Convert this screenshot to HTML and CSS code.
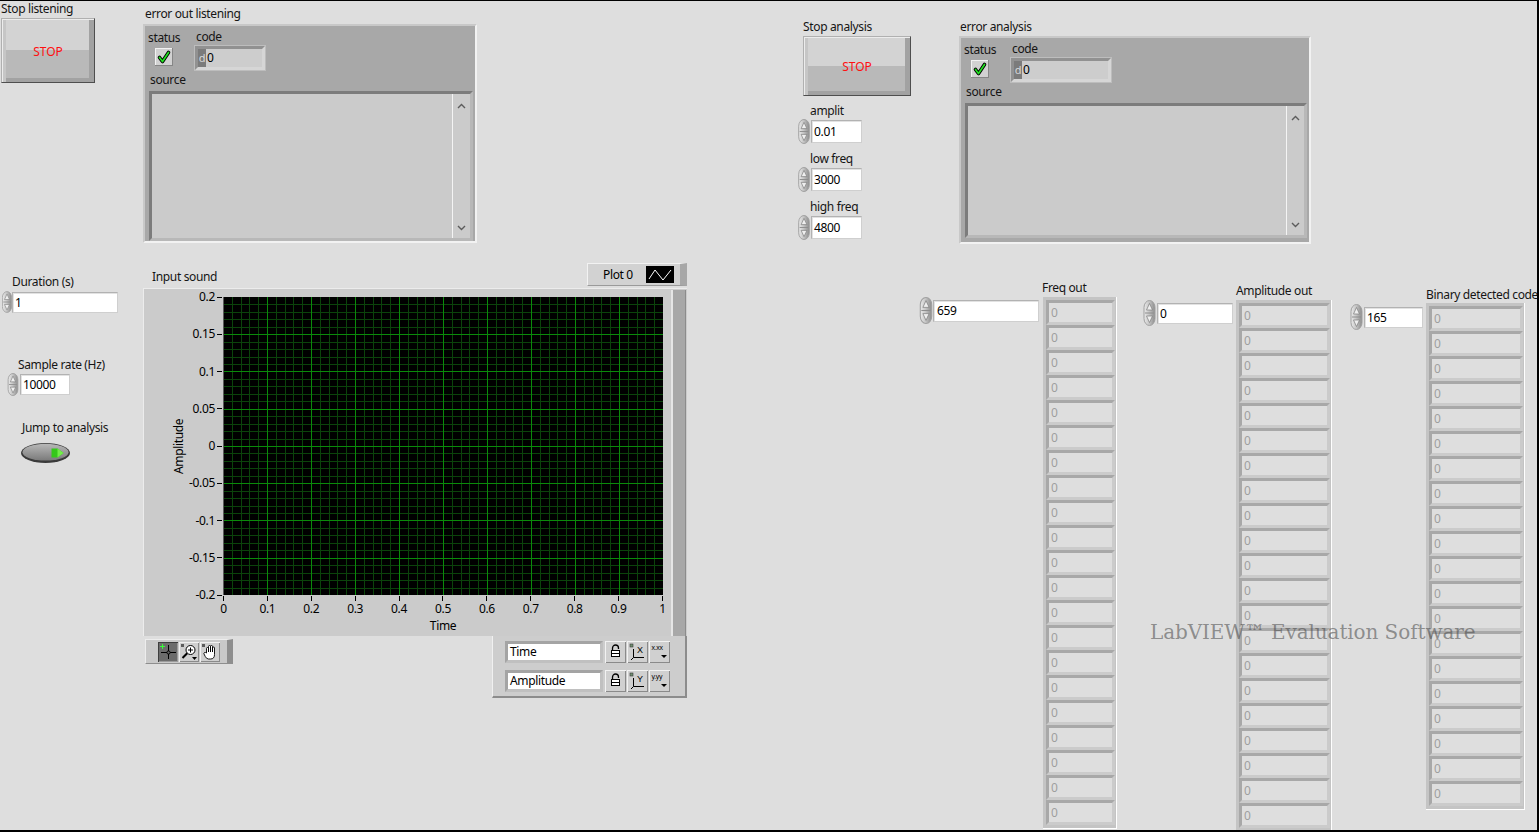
FILE: index.html
```html
<!DOCTYPE html>
<html>
<head>
<meta charset="utf-8">
<title>Front Panel</title>
<link rel="stylesheet" href="styles.css">
</head>
<body>
<svg class="defs" width="0" height="0" aria-hidden="true">
  <defs>
    <linearGradient id="gSpin" x1="0" y1="0" x2="1" y2="0">
      <stop offset="0" stop-color="#ebebeb"/>
      <stop offset="0.45" stop-color="#c6c6c6"/>
      <stop offset="1" stop-color="#8c8c8c"/>
    </linearGradient>
    <linearGradient id="gJump" x1="0" y1="0" x2="0" y2="1">
      <stop offset="0" stop-color="#b8b8b8"/>
      <stop offset="1" stop-color="#7a7a7a"/>
    </linearGradient>
    <symbol id="spin" viewBox="0 0 12 26">
      <rect x="0.5" y="0.5" width="11" height="25" rx="5.5" ry="7" fill="url(#gSpin)" stroke="#a0a0a0"/>
      <line x1="1.5" y1="13" x2="10.5" y2="13" stroke="#8e8e8e"/>
      <path d="M6 3.5 L9 10 L3 10 Z" fill="#efefef" stroke="#7c7c7c" stroke-width="0.7"/>
      <path d="M6 22.5 L9 16 L3 16 Z" fill="#efefef" stroke="#7c7c7c" stroke-width="0.7"/>
    </symbol>
    <symbol id="chk" viewBox="0 0 18 18">
      <rect x="0" y="0" width="18" height="18" fill="#868686"/>
      <rect x="0" y="0" width="17" height="17" fill="#f2f2f2"/>
      <rect x="1" y="1" width="16" height="16" fill="#d2d2d2"/>
      <path d="M4.5 9.5 L7.5 13.5 L13.5 4.5" fill="none" stroke="#000" stroke-width="3.6" stroke-linecap="round" stroke-linejoin="round"/>
      <path d="M4.5 9.5 L7.5 13.5 L13.5 4.5" fill="none" stroke="#22e022" stroke-width="1.7" stroke-linecap="round" stroke-linejoin="round"/>
    </symbol>
    <symbol id="up" viewBox="0 0 9 6">
      <path d="M1 5 L4.5 1.5 L8 5" fill="none" stroke="#5c5c5c" stroke-width="1.4"/>
    </symbol>
    <symbol id="down" viewBox="0 0 9 6">
      <path d="M1 1 L4.5 4.5 L8 1" fill="none" stroke="#5c5c5c" stroke-width="1.4"/>
    </symbol>
    <symbol id="lock" viewBox="0 0 21 21">
      <path d="M7.5 9.5V7a3 3 0 0 1 6 0v1" fill="none" stroke="#000" stroke-width="1.3"/>
      <rect x="6.5" y="9.5" width="8" height="6" fill="#fff" stroke="#000"/>
      <path d="M7 12.5h7" stroke="#000"/>
    </symbol>
  </defs>
</svg>

<div class="fp">

  <!-- Stop listening -->
  <div class="ctl p-stopL">
    <div class="lbl">Stop listening</div>
    <div class="stop stop-l"><span>STOP</span></div>
  </div>

  <!-- error out listening -->
  <div class="ctl p-errL">
    <div class="lbl lbl-in">error out listening</div>
    <div class="cluster cl-l">
      <div class="cl-row">
        <div class="cl-status">
          <div class="lbl">status</div>
          <svg class="chk" width="18" height="18"><use href="#chk"/></svg>
        </div>
        <div class="cl-code">
          <div class="lbl lbl-code">code</div>
          <div class="code code-l"><span class="radix">d</span><span class="cval">0</span></div>
        </div>
      </div>
      <div class="lbl lbl-src">source</div>
      <div class="src src-l">
        <div class="src-text"></div>
        <div class="src-bar">
          <svg width="9" height="6"><use href="#up"/></svg>
          <svg width="9" height="6"><use href="#down"/></svg>
        </div>
      </div>
    </div>
  </div>

  <!-- Stop analysis -->
  <div class="ctl p-stopA">
    <div class="lbl">Stop analysis</div>
    <div class="stop stop-a"><span>STOP</span></div>
  </div>

  <!-- amplit / low freq / high freq -->
  <div class="ctl p-amp">
    <div class="lbl lbl-num">amplit</div>
    <div class="numrow">
      <svg class="spin" width="12" height="25"><use href="#spin"/></svg>
      <div class="num num-af">0.01</div>
    </div>
  </div>
  <div class="ctl p-low">
    <div class="lbl lbl-num">low freq</div>
    <div class="numrow">
      <svg class="spin" width="12" height="25"><use href="#spin"/></svg>
      <div class="num num-af">3000</div>
    </div>
  </div>
  <div class="ctl p-high">
    <div class="lbl lbl-num">high freq</div>
    <div class="numrow">
      <svg class="spin" width="12" height="25"><use href="#spin"/></svg>
      <div class="num num-af">4800</div>
    </div>
  </div>

  <!-- error analysis -->
  <div class="ctl p-errA">
    <div class="lbl lbl-in1">error analysis</div>
    <div class="cluster cl-a">
      <div class="cl-row">
        <div class="cl-status">
          <div class="lbl">status</div>
          <svg class="chk" width="18" height="18"><use href="#chk"/></svg>
        </div>
        <div class="cl-code">
          <div class="lbl lbl-code">code</div>
          <div class="code code-a"><span class="radix">d</span><span class="cval">0</span></div>
        </div>
      </div>
      <div class="lbl lbl-src">source</div>
      <div class="src src-a">
        <div class="src-text"></div>
        <div class="src-bar">
          <svg width="9" height="6"><use href="#up"/></svg>
          <svg width="9" height="6"><use href="#down"/></svg>
        </div>
      </div>
    </div>
  </div>

  <!-- Duration -->
  <div class="ctl p-dur">
    <div class="lbl lbl-dur">Duration (s)</div>
    <div class="numrow">
      <svg class="spin" width="10" height="24"><use href="#spin"/></svg>
      <div class="num num-dur">1</div>
    </div>
  </div>

  <!-- Sample rate -->
  <div class="ctl p-sr">
    <div class="lbl lbl-sr">Sample rate (Hz)</div>
    <div class="numrow">
      <svg class="spin" width="12" height="23"><use href="#spin"/></svg>
      <div class="num num-sr">10000</div>
    </div>
  </div>

  <!-- Jump to analysis -->
  <div class="ctl p-jump">
    <div class="lbl lbl-jump">Jump to analysis</div>
    <svg class="jbtn" width="52" height="22" viewBox="0 0 52 22">
      <ellipse cx="25.5" cy="11" rx="24.5" ry="10" fill="#3a3a3a"/>
      <ellipse cx="25.5" cy="10.2" rx="23" ry="8.4" fill="url(#gJump)"/>
      <path d="M31.5 6.5h6l6 4.5l-6 4.5h-6z" fill="#35c81a"/>
      <path d="M37.5 6.5l6 4.5l-6 4.5z" fill="#72ee48"/>
    </svg>
  </div>

  <!-- Waveform graph -->
  <div class="ctl p-graph">
    <div class="g-head">
      <div class="lbl g-name">Input sound</div>
      <div class="plegend">
        <span class="pname">Plot 0</span>
        <svg class="swatch" width="28" height="17" viewBox="0 0 28 17">
          <rect width="28" height="17" fill="#000"/>
          <polyline points="3,13 9,4 17,14 25,4" fill="none" stroke="#fff" stroke-width="1"/>
        </svg>
      </div>
    </div>
    <div class="g-frame">
      <div class="g-yaxis">
        <div class="g-yname">Amplitude</div>
        <div class="g-yticks">
          <div class="yt"><span>0.2</span></div>
          <div class="yt"><span>0.15</span></div>
          <div class="yt"><span>0.1</span></div>
          <div class="yt"><span>0.05</span></div>
          <div class="yt"><span>0</span></div>
          <div class="yt"><span>-0.05</span></div>
          <div class="yt"><span>-0.1</span></div>
          <div class="yt"><span>-0.15</span></div>
          <div class="yt"><span>-0.2</span></div>
        </div>
      </div>
      <div class="g-plotcol">
        <svg class="plot" width="440" height="298" viewBox="0 0 440 298" shape-rendering="crispEdges">
          <rect width="440" height="298" fill="#000"/>
          <path stroke="#0b430b" stroke-width="1" d="M9.5 0v298M18.5 0v298M26.5 0v298M35.5 0v298M53.5 0v298M62.5 0v298M70.5 0v298M79.5 0v298M97.5 0v298M106.5 0v298M114.5 0v298M123.5 0v298M141.5 0v298M150.5 0v298M158.5 0v298M167.5 0v298M185.5 0v298M194.5 0v298M202.5 0v298M211.5 0v298M229.5 0v298M238.5 0v298M246.5 0v298M255.5 0v298M273.5 0v298M282.5 0v298M290.5 0v298M299.5 0v298M317.5 0v298M326.5 0v298M334.5 0v298M343.5 0v298M361.5 0v298M370.5 0v298M378.5 0v298M387.5 0v298M405.5 0v298M414.5 0v298M422.5 0v298M431.5 0v298M0 7.5h440M0 15.5h440M0 22.5h440M0 30.5h440M0 45.5h440M0 52.5h440M0 60.5h440M0 67.5h440M0 82.5h440M0 89.5h440M0 97.5h440M0 104.5h440M0 119.5h440M0 127.5h440M0 134.5h440M0 142.5h440M0 156.5h440M0 164.5h440M0 171.5h440M0 179.5h440M0 194.5h440M0 201.5h440M0 209.5h440M0 216.5h440M0 231.5h440M0 238.5h440M0 246.5h440M0 253.5h440M0 268.5h440M0 276.5h440M0 283.5h440M0 291.5h440"/>
          <path stroke="#0a8a0a" stroke-width="1" d="M44.5 0v298M88.5 0v298M132.5 0v298M176.5 0v298M220.5 0v298M264.5 0v298M308.5 0v298M352.5 0v298M396.5 0v298M0 37.5h440M0 74.5h440M0 112.5h440M0 149.5h440M0 186.5h440M0 223.5h440M0 261.5h440"/>
          <path stroke="#5a5a5a" stroke-width="1" d="M0.5 0v298"/>
        </svg>
        <div class="g-xticks">
          <div class="xt"><span>0</span></div>
          <div class="xt"><span>0.1</span></div>
          <div class="xt"><span>0.2</span></div>
          <div class="xt"><span>0.3</span></div>
          <div class="xt"><span>0.4</span></div>
          <div class="xt"><span>0.5</span></div>
          <div class="xt"><span>0.6</span></div>
          <div class="xt"><span>0.7</span></div>
          <div class="xt"><span>0.8</span></div>
          <div class="xt"><span>0.9</span></div>
          <div class="xt"><span>1</span></div>
        </div>
        <div class="g-xname">Time</div>
      </div>
      <div class="g-strip"></div>
    </div>
    <div class="g-foot">
      <div class="palette">
        <div class="pbtn pbtn-on">
          <svg width="20" height="20" viewBox="0 0 20 20">
            <path d="M10.5 3v14M3 10.5h15" stroke="#000" stroke-width="1"/>
            <circle cx="10.5" cy="10.5" r="1.6" fill="#6a6a6a" stroke="#000"/>
            <path d="M4.5 2v5M2 4.5h5" stroke="#39ff39" stroke-width="1"/>
          </svg>
        </div>
        <div class="pbtn">
          <svg width="20" height="20" viewBox="0 0 20 20">
            <rect x="2" y="2" width="3" height="3" fill="#5c5c5c"/>
            <circle cx="11.5" cy="8" r="4.5" fill="#fff" stroke="#000"/>
            <path d="M11.5 5.5v5M9 8h5" stroke="#000"/>
            <path d="M8.2 11.3L3.5 16" stroke="#000" stroke-width="2"/>
            <path d="M13 15h5l-2.5 3z" fill="#000"/>
          </svg>
        </div>
        <div class="pbtn">
          <svg width="20" height="20" viewBox="0 0 20 20">
            <rect x="2" y="2" width="3" height="3" fill="#5c5c5c"/>
            <path d="M6.5 11V6.5a1 1 0 0 1 2 0V10V4.5a1 1 0 0 1 2 0V10V4.5a1 1 0 0 1 2 0V10V6a1 1 0 0 1 2 0V12.5q0 4.5-4 4.5h-2q-2 0-3.3-2.6L4 12a1 1 0 0 1 2-1z" fill="#fff" stroke="#000" stroke-width="0.9"/>
          </svg>
        </div>
      </div>
      <div class="axleg">
        <div class="axrow">
          <div class="axfield">Time</div>
          <div class="axbtn"><svg width="21" height="21"><use href="#lock"/></svg></div>
          <div class="axbtn">
            <svg width="21" height="21" viewBox="0 0 21 21">
              <rect x="3" y="3" width="3" height="3" fill="#6f8f6f" stroke="#3a3a3a" stroke-width="0.6"/>
              <path d="M6.5 8v8.5H17M6.5 16.5L4 19" fill="none" stroke="#000" stroke-width="1"/>
              <text x="10" y="12" font-size="9" font-family="Liberation Sans, sans-serif" fill="#000">X</text>
            </svg>
          </div>
          <div class="axbtn">
            <svg width="21" height="21" viewBox="0 0 21 21">
              <text x="2.5" y="9" font-size="7" font-family="Liberation Sans, sans-serif" fill="#000">x.xx</text>
              <path d="M12 14h6l-3 3z" fill="#000"/>
            </svg>
          </div>
        </div>
        <div class="axrow">
          <div class="axfield">Amplitude</div>
          <div class="axbtn"><svg width="21" height="21"><use href="#lock"/></svg></div>
          <div class="axbtn">
            <svg width="21" height="21" viewBox="0 0 21 21">
              <rect x="3" y="3" width="3" height="3" fill="#6f8f6f" stroke="#3a3a3a" stroke-width="0.6"/>
              <path d="M6.5 8v8.5H17M6.5 16.5L4 19" fill="none" stroke="#000" stroke-width="1"/>
              <text x="10" y="12" font-size="9" font-family="Liberation Sans, sans-serif" fill="#000">Y</text>
            </svg>
          </div>
          <div class="axbtn">
            <svg width="21" height="21" viewBox="0 0 21 21">
              <text x="2.5" y="9" font-size="7" font-family="Liberation Sans, sans-serif" fill="#000">y.yy</text>
              <path d="M12 14h6l-3 3z" fill="#000"/>
            </svg>
          </div>
        </div>
      </div>
    </div>
  </div>

  <!-- Freq out -->
  <div class="ctl p-fidx">
    <div class="numrow">
      <svg class="spin" width="14" height="27"><use href="#spin"/></svg>
      <div class="num num-fidx">659</div>
    </div>
  </div>
  <div class="ctl p-freq">
    <div class="lbl">Freq out</div>
    <div class="aframe af-freq">
      <div class="el">0</div><div class="el">0</div><div class="el">0</div><div class="el">0</div><div class="el">0</div><div class="el">0</div><div class="el">0</div>
      <div class="el">0</div><div class="el">0</div><div class="el">0</div><div class="el">0</div><div class="el">0</div><div class="el">0</div><div class="el">0</div>
      <div class="el">0</div><div class="el">0</div><div class="el">0</div><div class="el">0</div><div class="el">0</div><div class="el">0</div><div class="el">0</div>
    </div>
  </div>

  <!-- Amplitude out -->
  <div class="ctl p-aidx">
    <div class="numrow">
      <svg class="spin" width="13" height="26"><use href="#spin"/></svg>
      <div class="num num-aidx">0</div>
    </div>
  </div>
  <div class="ctl p-aout">
    <div class="lbl">Amplitude out</div>
    <div class="aframe af-amp">
      <div class="el">0</div><div class="el">0</div><div class="el">0</div><div class="el">0</div><div class="el">0</div><div class="el">0</div><div class="el">0</div>
      <div class="el">0</div><div class="el">0</div><div class="el">0</div><div class="el">0</div><div class="el">0</div><div class="el">0</div><div class="el">0</div>
      <div class="el">0</div><div class="el">0</div><div class="el">0</div><div class="el">0</div><div class="el">0</div><div class="el">0</div><div class="el">0</div>
    </div>
  </div>

  <!-- Binary detected code -->
  <div class="ctl p-bidx">
    <div class="numrow">
      <svg class="spin" width="13" height="26"><use href="#spin"/></svg>
      <div class="num num-bidx">165</div>
    </div>
  </div>
  <div class="ctl p-bin">
    <div class="lbl">Binary detected code</div>
    <div class="aframe af-bin">
      <div class="el">0</div><div class="el">0</div><div class="el">0</div><div class="el">0</div><div class="el">0</div>
      <div class="el">0</div><div class="el">0</div><div class="el">0</div><div class="el">0</div><div class="el">0</div>
      <div class="el">0</div><div class="el">0</div><div class="el">0</div><div class="el">0</div><div class="el">0</div>
      <div class="el">0</div><div class="el">0</div><div class="el">0</div><div class="el">0</div><div class="el">0</div>
    </div>
  </div>

  <div class="watermark">LabVIEW™ Evaluation Software</div>
</div>
</body>
</html>
```

FILE: styles.css
```css
* { box-sizing: border-box; }

html, body {
  margin: 0;
  padding: 0;
  background: #dedede;
}

.defs {
  position: absolute;
  width: 0;
  height: 0;
  overflow: hidden;
}

.fp {
  position: relative;
  width: 1539px;
  height: 832px;
  border-top: 1px solid #000;
  border-right: 2px solid #000;
  border-bottom: 2px solid #000;
  background: #dedede;
  overflow: hidden;
  font-family: "Noto Sans", "Open Sans", sans-serif;
  font-size: 12px;
  letter-spacing: -0.35px;
  line-height: 15px;
  color: #151515;
}

/* free-canvas controls of the front panel */
.ctl {
  position: absolute;
  display: flex;
  flex-direction: column;
  align-items: flex-start;
}

.lbl {
  white-space: nowrap;
  line-height: 15px;
}

.p-stopL { left: 1px; top: 0; }
.p-errL  { left: 143px; top: 5px; }
.p-stopA { left: 803px; top: 18px; }
.p-amp   { left: 798px; top: 102px; }
.p-low   { left: 798px; top: 150px; }
.p-high  { left: 798px; top: 198px; }
.p-errA  { left: 959px; top: 18px; }
.p-dur   { left: 2px; top: 273px; }
.p-sr    { left: 7px; top: 356px; }
.p-jump  { left: 20px; top: 419px; }
.p-graph { left: 143px; top: 262px; width: 544px; }
.p-fidx  { left: 919px; top: 295px; }
.p-freq  { left: 1042px; top: 279px; }
.p-aidx  { left: 1143px; top: 298px; }
.p-aout  { left: 1236px; top: 282px; }
.p-bidx  { left: 1350px; top: 302px; }
.p-bin   { left: 1426px; top: 286px; }

/* STOP buttons */
.stop {
  display: flex;
  align-items: center;
  justify-content: center;
  color: #ff1010;
  letter-spacing: 0;
  border: 1px solid;
  border-color: #b0b0b0 #4e4e4e #4e4e4e #b0b0b0;
  background: linear-gradient(#d3d3d3 0, #d3d3d3 50%, #b9b9b9 50%, #b9b9b9 100%);
  box-shadow: inset 1px 1px 0 #ececec, inset 4px 0 0 #c6c6c6, inset -5px -4px 0 #a2a2a2;
}
.stop span { margin-top: 1px; }
.stop-l { width: 94px; height: 65px; margin-top: 2px; }
.stop-a { width: 108px; height: 60px; margin-top: 2px; }

/* error clusters */
.lbl-in  { margin-left: 2px; }
.lbl-in1 { margin-left: 1px; }

.cluster {
  margin-top: 3px;
  display: flex;
  flex-direction: column;
  align-items: flex-start;
  background: #a8a8a8;
  border: 2px solid;
  border-color: #c8c8c8 #f2f2f2 #f2f2f2 #c8c8c8;
  padding: 4px 3px 0 3px;
}
.cl-l { width: 334px; height: 219px; }
.cl-a { width: 352px; height: 208px; margin-top: 2px; }

.cl-row {
  display: flex;
  align-items: flex-start;
}
.cl-status {
  display: flex;
  flex-direction: column;
  align-items: flex-start;
  width: 47px;
}
.cl-status .chk { margin-top: 3px; margin-left: 7px; }
.cl-code {
  display: flex;
  flex-direction: column;
  align-items: flex-start;
}
.lbl-code { margin-left: 1px; margin-top: -1px; }

.code {
  margin-top: 2px;
  height: 24px;
  display: flex;
  align-items: stretch;
  border: 3px solid;
  border-color: #919191 #d6d6d6 #d6d6d6 #919191;
  box-shadow: 0 0 0 1px #bdbdbd;
  background: #cdcdcd;
  line-height: 18px;
}
.code-l { width: 70px; }
.code-a { width: 100px; }
.radix {
  width: 8px;
  background: #7b7b7b;
  color: #d8d8d8;
  text-align: center;
  font-size: 11px;
}
.cval { padding-left: 1px; color: #000; }

.lbl-src { margin-top: 2px; margin-left: 2px; }

.src {
  margin-top: 4px;
  margin-left: 1px;
  display: flex;
  border: 3px solid;
  border-color: #7c7c7c #b8b8b8 #b8b8b8 #7c7c7c;
  background: #cbcbcb;
}
.src-l { width: 324px; height: 150px; }
.src-a { width: 342px; height: 135px; }
.src-text { flex: 1; }
.src-bar {
  width: 18px;
  border-left: 1px solid #f4f4f4;
  display: flex;
  flex-direction: column;
  justify-content: space-between;
  align-items: center;
  padding: 9px 0 7px 0;
}

/* numeric controls */
.lbl-num { margin-left: 12px; }
.numrow {
  display: flex;
  align-items: center;
  margin-top: 1px;
}
.num {
  background: #fff;
  border: 1px solid;
  border-color: #b2b2b2 #cfcfcf #cfcfcf #b2b2b2;
  box-shadow: inset 1px 1px 0 #e2e2e2;
  padding-left: 2px;
  color: #000;
  white-space: nowrap;
  display: flex;
  align-items: center;
}
.num-af   { width: 51px; height: 23px; margin-left: 1px; }
.lbl-dur  { margin-left: 10px; }
.num-dur  { width: 106px; height: 21px; }
.lbl-sr   { margin-left: 11px; }
.num-sr   { width: 50px; height: 21px; margin-left: 1px; }
.num-fidx { width: 106px; height: 22px; padding-left: 3px; }
.num-aidx { width: 76px; height: 21px; margin-left: 1px; }
.num-bidx { width: 59px; height: 21px; margin-left: 1px; }

.lbl-jump { margin-left: 2px; }
.jbtn { margin-top: 7px; display: block; }

/* graph */
.g-head {
  width: 544px;
  height: 25px;
  display: flex;
  justify-content: space-between;
  align-items: flex-start;
}
.g-name { margin-left: 9px; margin-top: 6px; }
.plegend {
  width: 100px;
  height: 23px;
  display: flex;
  align-items: center;
  padding-left: 15px;
  background: #d2d2d2;
  border-top: 1px solid #f2f2f2;
  border-left: 1px solid #f2f2f2;
  border-bottom: 1px solid #9a9a9a;
  border-right: 7px solid #a7a7a7;
  color: #000;
}
.swatch { margin-left: auto; margin-right: 6px; display: block; }

.g-frame {
  width: 544px;
  height: 348px;
  display: flex;
  background: #cbcbcb;
  border-top: 1px solid #ececec;
  border-left: 1px solid #ececec;
}
.g-yaxis {
  width: 79px;
  display: flex;
  align-items: flex-start;
  padding-top: 8px;
}
.g-yname {
  writing-mode: vertical-rl;
  transform: rotate(180deg);
  height: 298px;
  text-align: center;
  margin-left: 27px;
  width: 15px;
  color: #000;
}
.g-yticks {
  flex: 1;
  height: 298px;
  display: flex;
  flex-direction: column;
  justify-content: space-between;
  align-items: flex-end;
}
.yt {
  height: 0;
  display: flex;
  align-items: center;
}
.yt span {
  display: flex;
  align-items: center;
  color: #000;
  line-height: 14px;
}
.yt span::after {
  content: "";
  width: 5px;
  height: 1px;
  background: #000;
  margin-left: 2px;
  margin-right: 1px;
}

.g-plotcol {
  width: 440px;
  display: flex;
  flex-direction: column;
  padding-top: 8px;
}
.plot { display: block; }
.g-xticks {
  width: 440px;
  display: flex;
  justify-content: space-between;
}
.xt {
  width: 1px;
  display: flex;
  flex-direction: column;
  align-items: center;
}
.xt::before {
  content: "";
  width: 1px;
  height: 5px;
  margin-top: 1px;
  background: #000;
}
.xt span {
  line-height: 14px;
  color: #000;
  white-space: nowrap;
  margin-top: 1px;
}
.g-xname {
  text-align: center;
  margin-top: 2px;
  color: #000;
}
.g-strip {
  width: 15px;
  margin-left: 8px;
  margin-top: 1px;
  background: #a8a8a8;
  border-left: 2px solid #e6e6e6;
  border-right: 1px solid #8c8c8c;
}

.g-foot {
  width: 544px;
  display: flex;
  align-items: flex-start;
  justify-content: space-between;
}
.palette {
  margin-top: 3px;
  margin-left: 2px;
  width: 88px;
  height: 25px;
  display: flex;
  align-items: center;
  gap: 1px;
  padding-left: 12px;
  background: #c9c9c9;
  border-top: 1px solid #ededed;
  border-left: 1px solid #ededed;
  border-right: 6px solid #8e8e8e;
  border-bottom: 1px solid #8e8e8e;
}
.pbtn {
  width: 20px;
  height: 20px;
  background: #cfcfcf;
  box-shadow: inset 1px 1px 0 #f0f0f0, inset -1px -1px 0 #8a8a8a;
}
.pbtn svg { display: block; }
.pbtn-on {
  background: #6c6c6c;
  box-shadow: inset 1px 1px 0 #3e3e3e, inset -1px -1px 0 #9a9a9a;
}

.axleg {
  width: 195px;
  height: 62px;
  background: #cdcdcd;
  border-left: 1px solid #f0f0f0;
  border-bottom: 2px solid #8c8c8c;
  border-right: 2px solid #8c8c8c;
  padding: 5px 0 0 12px;
  display: flex;
  flex-direction: column;
  gap: 7px;
}
.axrow {
  display: flex;
  gap: 1px;
}
.axfield {
  width: 98px;
  height: 22px;
  background: #fff;
  border: 3px solid;
  border-color: #a4a4a4 #c0c0c0 #c0c0c0 #a4a4a4;
  padding-left: 2px;
  line-height: 16px;
  color: #000;
  margin-right: 1px;
}
.axbtn {
  width: 21px;
  height: 22px;
  background: #d0d0d0;
  box-shadow: inset 1px 1px 0 #f2f2f2, inset -1px -1px 0 #8a8a8a;
}
.axbtn svg { display: block; }

/* arrays */
.aframe {
  margin-top: 2px;
  display: flex;
  flex-direction: column;
  background: #c4c4c4;
  padding: 3px 1px 3px 3px;
  border-right: 1px solid #fff;
  border-bottom: 1px solid #fff;
}
.af-freq { width: 74px; margin-left: 1px; }
.af-amp  { width: 96px; }
.af-bin  { width: 99px; margin-top: 1px; }
.el {
  height: 25px;
  border: 3px solid;
  border-color: #a8a8a8 #cbcbcb #cbcbcb #a8a8a8;
  background: #dedede;
  color: #9e9e9e;
  padding-left: 2px;
  line-height: 19px;
}

/* evaluation watermark */
.watermark {
  position: absolute;
  left: 1150px;
  top: 619px;
  font-family: "DejaVu Serif", "Liberation Serif", serif;
  font-size: 20px;
  letter-spacing: -0.1px;
  line-height: 24px;
  color: rgba(70, 70, 70, 0.55);
  white-space: nowrap;
  pointer-events: none;
}
```
